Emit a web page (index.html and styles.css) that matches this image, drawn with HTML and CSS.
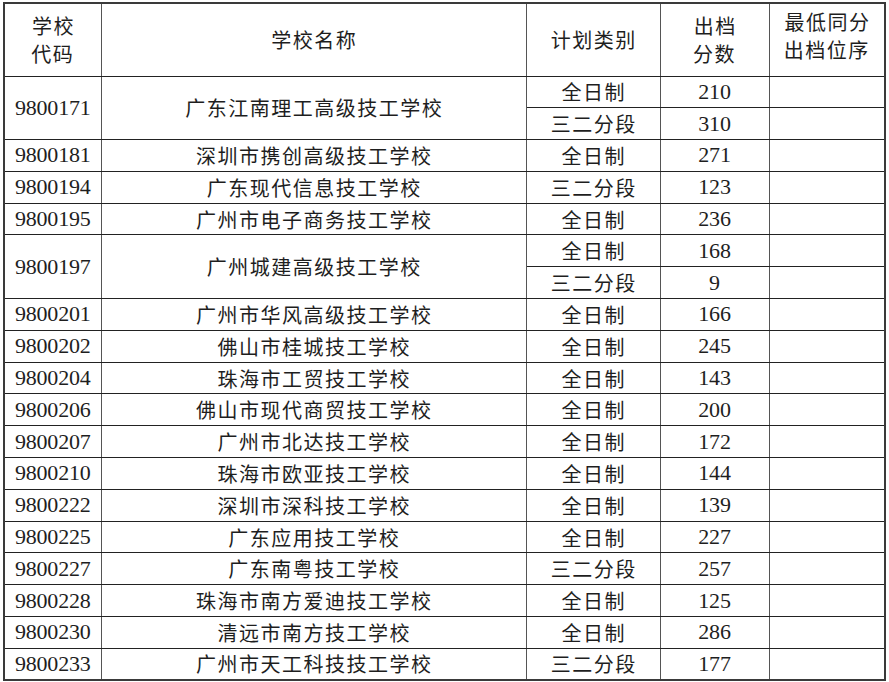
FILE: index.html
```html
<!DOCTYPE html>
<html lang="zh-CN">
<head>
<meta charset="utf-8">
<title>出档分数</title>
<link rel="stylesheet" href="styles.css">
</head>
<body>
<table class="grid">
  <colgroup>
    <col class="c-code"><col class="c-name"><col class="c-type"><col class="c-score"><col class="c-rank">
  </colgroup>
  <thead>
    <tr class="head">
      <th class="zh">学校<br>代码</th>
      <th class="zh">学校名称</th>
      <th class="zh">计划类别</th>
      <th class="zh">出档<br>分数</th>
      <th class="zh top">最低同分<br>出档位序</th>
    </tr>
  </thead>
  <tbody>
    <tr><td class="num" rowspan="2">9800171</td><td class="zh" rowspan="2">广东江南理工高级技工学校</td><td class="zh">全日制</td><td class="num">210</td><td></td></tr>
    <tr><td class="zh">三二分段</td><td class="num">310</td><td></td></tr>
    <tr><td class="num">9800181</td><td class="zh">深圳市携创高级技工学校</td><td class="zh">全日制</td><td class="num">271</td><td></td></tr>
    <tr><td class="num">9800194</td><td class="zh">广东现代信息技工学校</td><td class="zh">三二分段</td><td class="num">123</td><td></td></tr>
    <tr><td class="num">9800195</td><td class="zh">广州市电子商务技工学校</td><td class="zh">全日制</td><td class="num">236</td><td></td></tr>
    <tr><td class="num" rowspan="2">9800197</td><td class="zh" rowspan="2">广州城建高级技工学校</td><td class="zh">全日制</td><td class="num">168</td><td></td></tr>
    <tr><td class="zh">三二分段</td><td class="num">9</td><td></td></tr>
    <tr><td class="num">9800201</td><td class="zh">广州市华风高级技工学校</td><td class="zh">全日制</td><td class="num">166</td><td></td></tr>
    <tr><td class="num">9800202</td><td class="zh">佛山市桂城技工学校</td><td class="zh">全日制</td><td class="num">245</td><td></td></tr>
    <tr><td class="num">9800204</td><td class="zh">珠海市工贸技工学校</td><td class="zh">全日制</td><td class="num">143</td><td></td></tr>
    <tr><td class="num">9800206</td><td class="zh">佛山市现代商贸技工学校</td><td class="zh">全日制</td><td class="num">200</td><td></td></tr>
    <tr><td class="num">9800207</td><td class="zh">广州市北达技工学校</td><td class="zh">全日制</td><td class="num">172</td><td></td></tr>
    <tr><td class="num">9800210</td><td class="zh">珠海市欧亚技工学校</td><td class="zh">全日制</td><td class="num">144</td><td></td></tr>
    <tr><td class="num">9800222</td><td class="zh">深圳市深科技工学校</td><td class="zh">全日制</td><td class="num">139</td><td></td></tr>
    <tr><td class="num">9800225</td><td class="zh">广东应用技工学校</td><td class="zh">全日制</td><td class="num">227</td><td></td></tr>
    <tr><td class="num">9800227</td><td class="zh">广东南粤技工学校</td><td class="zh">三二分段</td><td class="num">257</td><td></td></tr>
    <tr><td class="num">9800228</td><td class="zh">珠海市南方爱迪技工学校</td><td class="zh">全日制</td><td class="num">125</td><td></td></tr>
    <tr><td class="num">9800230</td><td class="zh">清远市南方技工学校</td><td class="zh">全日制</td><td class="num">286</td><td></td></tr>
    <tr><td class="num">9800233</td><td class="zh">广州市天工科技技工学校</td><td class="zh">三二分段</td><td class="num">177</td><td></td></tr>
  </tbody>
</table>
</body>
</html>
```

FILE: styles.css
```css
html, body {
  margin: 0;
  padding: 0;
  background: #ffffff;
}
body {
  padding: 2px 0 0 3px;
}
.grid {
  border-collapse: collapse;
  table-layout: fixed;
  width: 881px;
  border: 2px solid #3a3a3a;
  color: #1e1e1e;
}
.c-code { width: 97px; }
.c-name { width: 425px; }
.c-type { width: 134px; }
.c-score { width: 109px; }
.c-rank { width: 116px; }

.grid th, .grid td {
  border: 1px solid #222222;
  padding: 0;
  text-align: center;
  vertical-align: middle;
  font-weight: 400;
}
.grid th {
  border-left-color: #555;
  border-right-color: #555;
}
.grid tbody td {
  border-left: 1.5px solid #555;
  border-right: 1.5px solid #555;
}
.head {
  height: 73px;
}
.head th {
  line-height: 28px;
}
.head th.top {
  vertical-align: top;
  padding-top: 4px;
}
.grid tbody tr {
  height: 31.8px;
}
.zh {
  font-family: "Noto Sans CJK SC", "Liberation Serif", sans-serif;
  font-size: 20px;
  font-weight: 300;
  letter-spacing: 1.5px;
  text-indent: 1.5px;
}
.num {
  font-family: "Liberation Serif", "Noto Sans CJK SC", serif;
  font-size: 22px;
  letter-spacing: -0.2px;
  line-height: 24px;
}
```
